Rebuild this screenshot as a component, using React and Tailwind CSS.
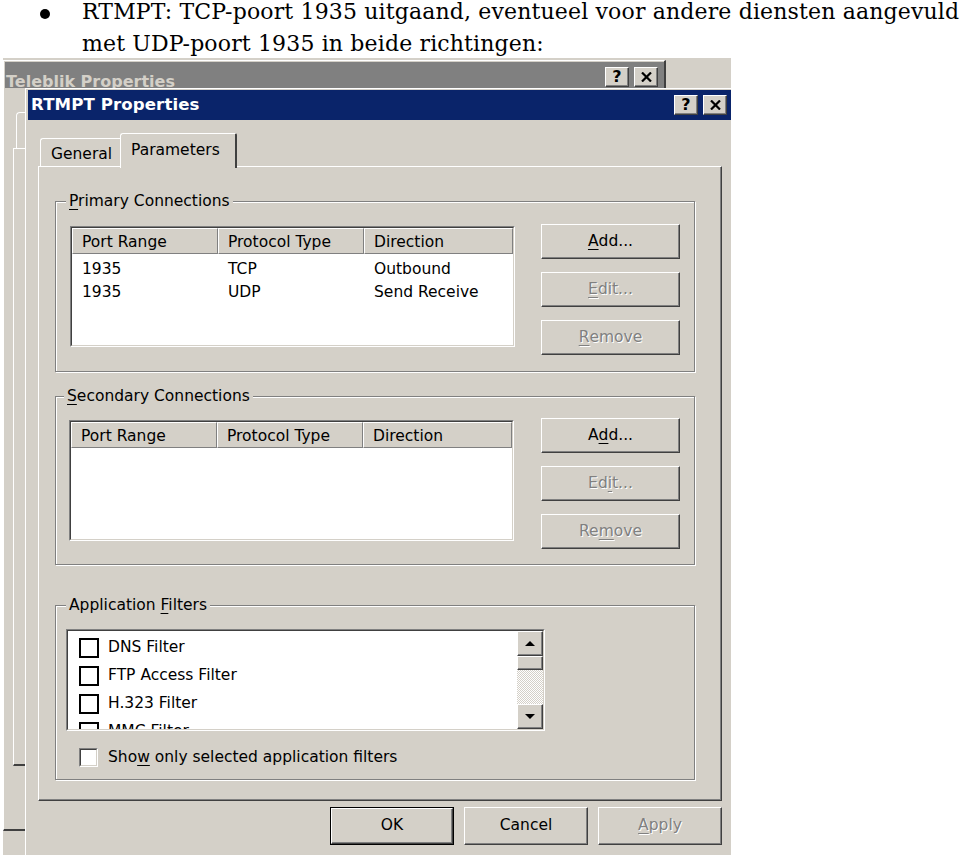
import React from 'react';

const ui = "font-['DejaVu_Sans',sans-serif]";
const raised =
  'border border-t-white border-l-white border-r-[#404040] border-b-[#404040] shadow-[inset_-1px_-1px_0_#808080] bg-[#d4d0c8]';
const dim = 'text-[#808080] [text-shadow:1px_1px_0_#fff]';

const Key = ({ children }) => <span className="underline underline-offset-[3px] decoration-1">{children}</span>;

const Button = ({ children, disabled, className = '' }) => (
  <div className={`flex items-center justify-center ${raised} ${disabled ? dim : 'text-black'} ${className}`}>
    {children}
  </div>
);

// twee-laags verzonken rand (lijsten, checkbox)
const Sunken = ({ className = '', inner = '', children }) => (
  <div className={`border border-t-[#808080] border-l-[#808080] border-r-white border-b-white ${className}`}>
    <div className={`h-full border border-t-[#404040] border-l-[#404040] border-r-[#d4d0c8] border-b-[#d4d0c8] bg-white ${inner}`}>
      {children}
    </div>
  </div>
);

const Group = ({ label, labelLeft, className = '', children }) => (
  <div className={`relative w-[640px] border border-[#808080] shadow-[inset_1px_1px_0_#fff,1px_1px_0_#fff] ${className}`}>
    <span className={`absolute top-[-10px] ${labelLeft} bg-[#d4d0c8] px-[3px] leading-[18px]`}>{label}</span>
    {children}
  </div>
);

const HeaderCell = ({ className, children }) => (
  <div className={`${className} h-[26px] flex items-center pl-[9px] pt-[3px] bg-[#d4d0c8] border border-t-white border-l-white border-r-[#808080] border-b-[#808080]`}>
    {children}
  </div>
);

const ListView = ({ rows }) => (
  <Sunken className="w-[445px] h-[121px] mt-[2px]">
    <div className="flex">
      <HeaderCell className="w-[146px]">Port Range</HeaderCell>
      <HeaderCell className="w-[146px]">Protocol Type</HeaderCell>
      <HeaderCell className="flex-1">Direction</HeaderCell>
    </div>
    <div className="pt-[4px]">
      {rows.map((r, i) => (
        <div key={i} className="flex h-[23px] items-center">
          <div className="w-[146px] pl-[10px]">{r[0]}</div>
          <div className="w-[146px] pl-[10px]">{r[1]}</div>
          <div className="flex-1 pl-[10px]">{r[2]}</div>
        </div>
      ))}
    </div>
  </Sunken>
);

const SideButtons = ({ add, edit, remove }) => (
  <div className="flex flex-col gap-[13px]">
    <Button className="w-[139px] h-[35px]">{add}</Button>
    <Button disabled className="w-[139px] h-[35px]">{edit}</Button>
    <Button disabled className="w-[139px] h-[35px]">{remove}</Button>
  </div>
);

const Arrow = ({ up }) => (
  <svg width="10" height="5" viewBox="0 0 10 5">
    <path d={up ? 'M5 0L10 5H0z' : 'M0 0H10L5 5z'} fill="#000" />
  </svg>
);

const CloseGlyph = () => (
  <svg width="11" height="10" viewBox="0 0 11 10">
    <path d="M1 0.5L10 9.5M10 0.5L1 9.5" stroke="#000" strokeWidth="2.2" />
  </svg>
);

const TitleButtons = () => (
  <div className="flex gap-[5px]">
    <Button className="w-[24px] h-[20px] font-bold text-[16px] leading-none">?</Button>
    <Button className="w-[24px] h-[20px]">
      <CloseGlyph />
    </Button>
  </div>
);

const filters = ['DNS Filter', 'FTP Access Filter', 'H.323 Filter', 'MMC Filter'];

const BackWindow = () => (
  <div className="absolute left-0 top-[2px] w-[663px] h-[771px] border-l border-t border-white border-r-2 border-r-[#404040] border-b-2 border-b-[#404040] pt-[1px] pl-[1px]">
    <div className="h-[26px] bg-[#808080] flex items-start justify-between pl-[1px] pr-[6px] overflow-hidden">
      <span className="text-[#d4d0c8] font-bold text-[16px] leading-[20px] pt-[10px]">Teleblik Properties</span>
      <div className="pt-[5px]">
        <TitleButtons />
      </div>
    </div>
    <div className="pl-[8px] pt-[24px]">
      <div className="ml-[3px] w-[80px] h-[36px] border-l border-t border-white rounded-tl-[4px]" />
      <div className="w-[640px] h-[618px] border-l border-t border-white border-b-2 border-b-[#404040]" />
    </div>
  </div>
);

const FrontWindow = () => (
  <div className={`absolute left-[22px] top-[30px] w-[706px] h-[780px] bg-[#d4d0c8] border-l border-t border-white pt-[1px] pl-[2px] ${ui} text-[15.5px] text-black`}>
    <div className="h-[30px] bg-[#0a246a] flex items-center justify-between pl-[3px] pr-[4px]">
      <span className="text-white font-bold text-[16.6px] tracking-[0.1px]">RTMPT Properties</span>
      <TitleButtons />
    </div>

    <div className="px-[10px] pt-[13px]">
      {/* tabs */}
      <div className="flex items-end h-[33px] pl-[2px]">
        <div className="w-[82px] h-[28px] pl-[10px] pt-[6px] leading-[18px] border-l border-t border-white border-r border-r-[#404040] rounded-tl-[3px] rounded-tr-[2px]">
          General
        </div>
        <div className="relative z-10 -ml-[2px] -mb-[2px] w-[117px] h-[35px] pl-[10px] pt-[7px] leading-[18px] bg-[#d4d0c8] border-l border-t border-white border-r-2 border-r-[#404040] rounded-tl-[3px] rounded-tr-[2px]">
          Parameters
        </div>
      </div>

      {/* panel */}
      <div className="w-[684px] h-[635px] border border-t-white border-l-white border-r-[#404040] border-b-[#404040] shadow-[inset_-1px_-1px_0_#808080] pl-[16px] pt-[34px]">
        <Group
          label={<><Key>P</Key>rimary Connections</>}
          labelLeft="left-[10px]"
          className="h-[171px] pt-[22px] pl-[14px] pr-[14px] flex justify-between items-start"
        >
          <ListView rows={[['1935', 'TCP', 'Outbound'], ['1935', 'UDP', 'Send Receive']]} />
          <SideButtons add={<><Key>A</Key>dd...</>} edit={<><Key>E</Key>dit...</>} remove={<><Key>R</Key>emove</>} />
        </Group>

        <Group
          label={<><Key>S</Key>econdary Connections</>}
          labelLeft="left-[8px]"
          className="mt-[24px] h-[169px] pt-[21px] pl-[13px] pr-[14px] flex justify-between items-start"
        >
          <ListView rows={[]} />
          <SideButtons add={<>A<Key>d</Key>d...</>} edit={<>Ed<Key>i</Key>t...</>} remove={<>Re<Key>m</Key>ove</>} />
        </Group>

        <Group
          label={<>Application <Key>F</Key>ilters</>}
          labelLeft="left-[10px]"
          className="mt-[40px] h-[175px] pt-[23px] pl-[10px]"
        >
          <Sunken className="w-[479px] h-[102px]" inner="flex">
            <div className="flex-1 overflow-hidden pt-[3px]">
              {filters.map((f) => (
                <div key={f} className="h-[28px] flex items-center gap-[9px] pl-[11px] shrink-0">
                  <div className="w-[20px] h-[20px] border-2 border-black bg-white" />
                  <span>{f}</span>
                </div>
              ))}
            </div>
            <div className="w-[26px] flex flex-col">
              <Button className="h-[25px]">
                <Arrow up />
              </Button>
              <Button className="h-[14px]" />
              <div className="flex-1 bg-[image:repeating-conic-gradient(#d4d0c8_0%_25%,#ffffff_0%_50%)] bg-[length:2px_2px]" />
              <Button className="h-[25px]">
                <Arrow />
              </Button>
            </div>
          </Sunken>
          <div className="flex items-center gap-[10px] mt-[15px] ml-[13px]">
            <Sunken className="w-[19px] h-[19px]" />
            <span>
              Sho<Key>w</Key> only selected application filters
            </span>
          </div>
        </Group>
      </div>

      {/* dialog buttons */}
      <div className="w-[684px] flex justify-end gap-[10px] mt-[6px]">
        <div className="w-[124px] h-[38px] border border-black">
          <Button className="w-full h-full">OK</Button>
        </div>
        <Button className="w-[124px] h-[38px]">Cancel</Button>
        <Button disabled className="w-[124px] h-[38px]">
          <Key>A</Key>pply
        </Button>
      </div>
    </div>
  </div>
);

export default function App() {
  return (
    <div className="w-[960px] h-[855px] bg-white overflow-hidden">
      <div className="h-[58px] flex font-['DejaVu_Serif',serif] text-[22px] tracking-[0.15px] leading-[32px] text-black whitespace-nowrap">
        <div className="w-[82px] shrink-0">
          <div className="ml-[40px] mt-[9px] w-[10px] h-[10px] rounded-full bg-black" />
        </div>
        <p className="-mt-[4px]">
          RTMPT: TCP-poort 1935 uitgaand, eventueel voor andere diensten aangevuld
          <br />
          met UDP-poort 1935 in beide richtingen:
        </p>
      </div>

      <div className={`relative ml-[3px] w-[728px] h-[797px] bg-[#d4d0c8] overflow-hidden ${ui}`}>
        <BackWindow />
        <FrontWindow />
      </div>
    </div>
  );
}
